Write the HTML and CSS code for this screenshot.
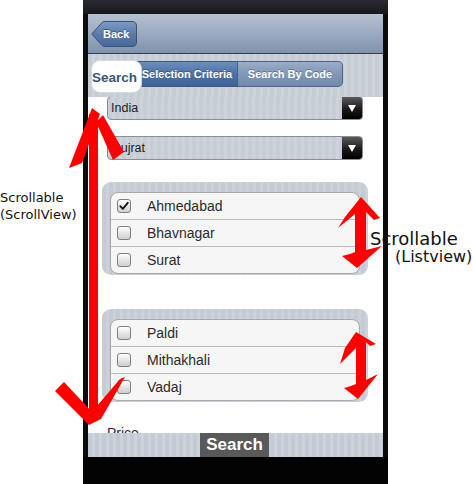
FILE: index.html
```html
<!DOCTYPE html>
<html>
<head>
<meta charset="utf-8">
<link rel="stylesheet" href="styles.css">
</head>
<body>
<div class="page">
  <div class="phone">
    <div class="status"></div>
    <div class="navbar">
      <div class="back">
        <svg class="back-shape" width="46" height="26" viewBox="0 0 46 26">
          <defs>
            <linearGradient id="bg" x1="0" y1="0" x2="0" y2="1">
              <stop offset="0" stop-color="#7d9cc6"/>
              <stop offset="0.5" stop-color="#5a7cab"/>
              <stop offset="1" stop-color="#486a9b"/>
            </linearGradient>
          </defs>
          <path d="M0.8 13 L11 1.6 Q12 0.5 14 0.5 H41 Q45.5 0.5 45.5 5 V21 Q45.5 25.5 41 25.5 H14 Q12 25.5 11 24.4 Z" fill="url(#bg)" stroke="#3b5274" stroke-width="1"/>
        </svg>
        <span class="back-label">Back</span>
      </div>
    </div>
    <div class="tabbar">
      <div class="segmented">
        <div class="seg seg-search">Search</div>
        <div class="seg seg-sel">Selection Criteria</div>
        <div class="seg seg-code">Search By Code</div>
      </div>
    </div>
    <div class="content">
      <div class="select select-first"><span>India</span><span class="drop"><i class="tri"></i></span></div>
      <div class="select select-second"><span>Gujrat</span><span class="drop"><i class="tri"></i></span></div>
      <div class="group group-first">
        <div class="list">
          <div class="row"><span class="check checked"><svg width="12" height="12" viewBox="0 0 12 12"><path d="M2.3 6.2 L4.8 8.8 L9.8 2.8" fill="none" stroke="#111" stroke-width="1.8" stroke-linecap="round" stroke-linejoin="round"/></svg></span>Ahmedabad</div>
          <div class="row"><span class="check"></span>Bhavnagar</div>
          <div class="row"><span class="check"></span>Surat</div>
        </div>
      </div>
      <div class="group group-second">
        <div class="list">
          <div class="row"><span class="check"></span>Paldi</div>
          <div class="row"><span class="check"></span>Mithakhali</div>
          <div class="row"><span class="check"></span>Vadaj</div>
        </div>
      </div>
      <div class="label">Price</div>
    </div>
    <div class="bottombar"><button class="search-btn">Search</button></div>
    <div class="home"></div>
  </div>

  <svg class="arrows" width="474" height="484" viewBox="0 0 474 484">
    <g fill="#ff0000">
      <rect x="89" y="114" width="9" height="302"/>
      <polygon points="92,108 100,114 82,163 69,168"/>
      <polygon points="96,122 103,115 124,152 113,160"/>
      <polygon points="55,391 64,382 94,414 89,425"/>
      <polygon points="91,413 120,379 125,377 101,419 89,425"/>
      <polygon points="361,197 380,218 374,220 366,212 366,250 382,246 357,268 342,256 350,254 355,252 355,214 338,228 345,217"/>
      <polygon points="356,332 376,344 370,346 366,342 366,380 378,374 358,399 344,388 351,386 356,384 356,348 340,364 345,348"/>
    </g>
  </svg>
  <div class="note note-left">Scrollable<br>(ScrollView)</div>
  <div class="note note-right-1">Scrollable</div>
  <div class="note note-right-2">(Listview)</div>
</div>
</body>
</html>
```

FILE: styles.css
```css
* { box-sizing: border-box; }
html, body { margin: 0; padding: 0; background: #fff; }
body {
  width: 474px;
  height: 484px;
  overflow: hidden;
  font-family: "Liberation Sans", Arial, sans-serif;
}
.page {
  position: relative;
  width: 474px;
  height: 484px;
  display: flex;
  padding-left: 83px;
}
.phone {
  width: 305px;
  height: 484px;
  display: flex;
  flex-direction: column;
  background: #050505;
  border-left: 5px solid #0c0c0c;
  border-right: 5px solid #0c0c0c;
}
.status {
  height: 14px;
  flex: none;
  background: linear-gradient(#2a2b2f, #17181a);
  margin: 0 -5px;
}
.navbar {
  height: 40px;
  flex: none;
  display: flex;
  align-items: center;
  padding-left: 3px;
  background: linear-gradient(#b6c1d1 0%, #9dacc1 45%, #7f92ad 100%);
  border-bottom: 1px solid #323d4d;
}
.back {
  position: relative;
  width: 46px;
  height: 26px;
  margin-top: 0;
}
.back-shape { position: absolute; left: 0; top: 0; }
.back-label {
  position: relative;
  display: block;
  padding-left: 12px;
  line-height: 26px;
  font-size: 11px;
  font-weight: bold;
  color: #fff;
  text-shadow: 0 -1px 0 rgba(0,0,0,0.35);
}
.tabbar {
  height: 43px;
  flex: none;
  padding: 7px 0 0 4px;
  background: repeating-linear-gradient(90deg, #c5ccd4 0 4px, #cdd3da 4px 7px);
}
.segmented {
  display: flex;
  align-items: flex-start;
  width: 251px;
  height: 26px;
}
.seg {
  flex: none;
  display: flex;
  align-items: center;
  justify-content: center;
  font-weight: bold;
  white-space: nowrap;
}
.seg-search {
  position: relative;
  z-index: 1;
  width: 51px;
  height: 33px;
  margin: -1px 0 0 -1px;
  justify-content: flex-start;
  padding-top: 2px;
  background: #fff;
  border: 1px solid #d5dae1;
  border-radius: 9px;
  font-size: 13.5px;
  color: #3b5478;
}
.seg-sel {
  width: 102px;
  height: 26px;
  margin-left: -6px;
  background: linear-gradient(#6d8fbf, #4d71a4 50%, #3f6396);
  border: 1px solid #3f5577;
  border-right: 1px solid #46628a;
  font-size: 11px;
  color: #fff;
  text-shadow: 0 -1px 0 rgba(0,0,0,0.3);
}
.seg-code {
  width: 105px;
  height: 26px;
  background: linear-gradient(#9aadc8, #8298b8 50%, #7189ab);
  border: 1px solid #4f6483;
  border-left: none;
  border-radius: 0 5px 5px 0;
  font-size: 11px;
  color: #fff;
  text-shadow: 0 -1px 0 rgba(0,0,0,0.3);
}
.content {
  height: 336px;
  flex: none;
  background: #fff;
  overflow: hidden;
  display: flex;
  flex-direction: column;
  align-items: flex-start;
}
.content > * { flex: none; }
.select {
  display: flex;
  align-items: center;
  justify-content: space-between;
  width: 256px;
  height: 24px;
  margin-left: 19px;
  padding-left: 3px;
  border: 1px solid #8b8f95;
  border-radius: 4px;
  overflow: hidden;
  background: repeating-linear-gradient(90deg, #c7cdd5 0 4px, #ced3da 4px 7px);
  font-size: 12.5px;
  color: #1c1c1c;
}
.select-first { margin-top: -1px; }
.select-second { margin-top: 16px; }
.drop {
  width: 20px;
  height: 100%;
  display: flex;
  align-items: center;
  justify-content: center;
  background: linear-gradient(#5a5a5a, #1a1a1a 55%, #000);
}
.tri {
  width: 0;
  height: 0;
  border-top: 7px solid #fff;
  border-left: 4px solid transparent;
  border-right: 4px solid transparent;
}
.group {
  width: 266px;
  margin-left: 14px;
  padding: 10px 8px 1px;
  border-radius: 9px;
  background: repeating-linear-gradient(90deg, #c4cbd3 0 4px, #ccd2d9 4px 7px);
}
.group-first { margin-top: 22px; }
.group-second { margin-top: 34px; }
.list {
  background: #f6f6f6;
  border: 1px solid #a9a9a9;
  border-radius: 8px;
  overflow: hidden;
}
.row {
  height: 26px;
  display: flex;
  align-items: center;
  padding-left: 6px;
  font-size: 14px;
  color: #2a2a2a;
}
.row + .row {
  height: 27px;
  border-top: 1px solid #bababa;
}
.check {
  width: 14px;
  height: 14px;
  flex: none;
  margin-right: 16px;
  border: 1px solid #808080;
  border-radius: 3px;
  background: linear-gradient(#ffffff, #e6e6e6 50%, #cfcfcf);
  display: flex;
  align-items: center;
  justify-content: center;
}
.label {
  margin: 23px 0 0 19px;
  font-size: 14px;
  color: #2a2a2a;
}
.bottombar {
  height: 24px;
  flex: none;
  padding-left: 112px;
  background: repeating-linear-gradient(90deg, #c3cad3 0 4px, #cdd3da 4px 7px);
}
.search-btn {
  width: 69px;
  height: 24px;
  border: none;
  padding: 0;
  background: #595959;
  color: #fff;
  font-family: "Liberation Sans", Arial, sans-serif;
  font-weight: bold;
  font-size: 17px;
}
.home {
  flex: 1;
  background: #030303;
  margin: 0 -5px;
}
.arrows {
  position: absolute;
  left: 0;
  top: 0;
  pointer-events: none;
}
.note {
  position: absolute;
  font-family: "DejaVu Sans", sans-serif;
  color: #111;
  white-space: nowrap;
}
.note-left {
  left: 0;
  top: 189px;
  font-size: 13px;
  line-height: 17px;
}
.note-right-1 {
  left: 370px;
  top: 229px;
  font-size: 18px;
  line-height: 20px;
}
.note-right-2 {
  left: 395px;
  top: 248px;
  font-size: 16px;
  line-height: 18px;
}
```
